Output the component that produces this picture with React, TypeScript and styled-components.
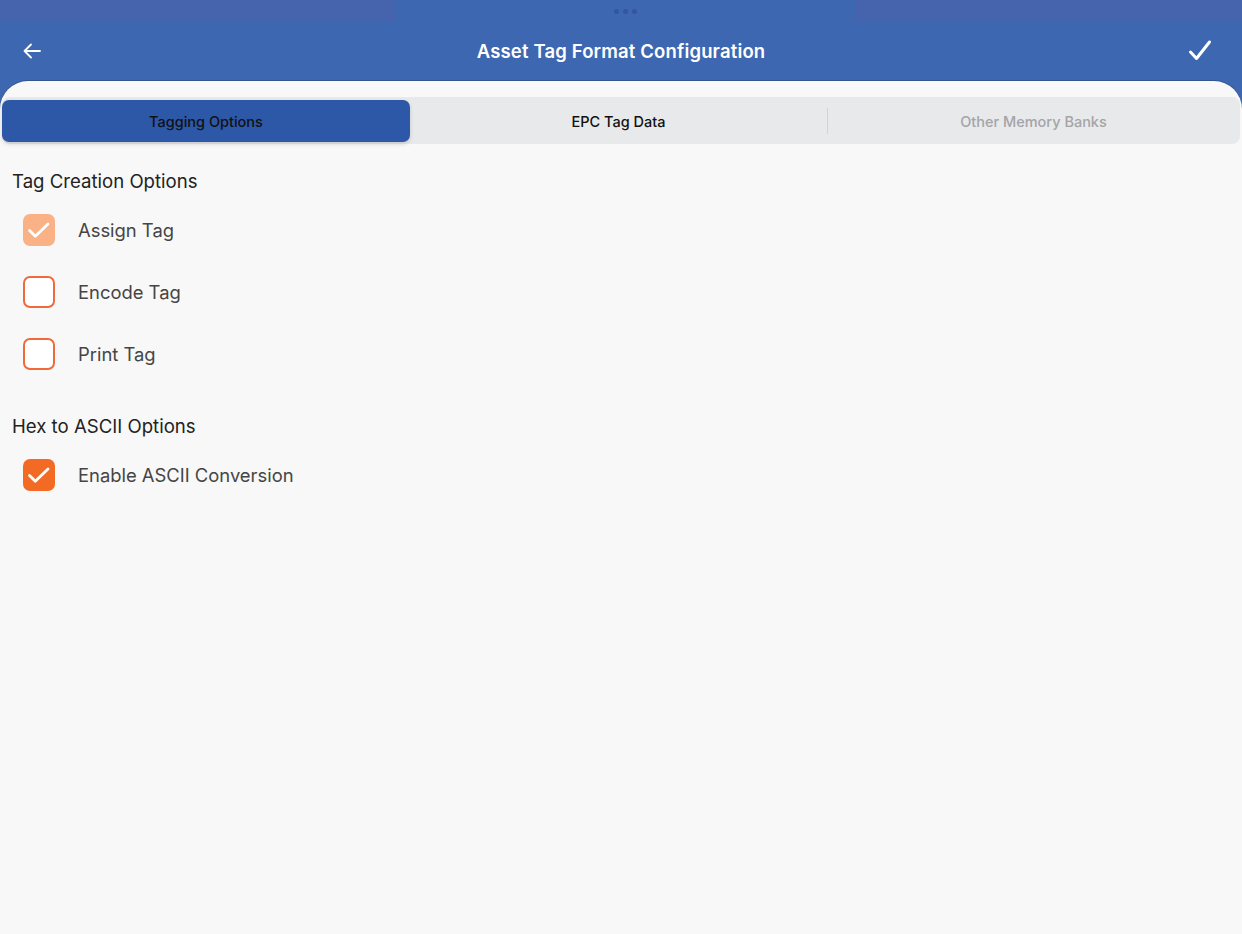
import React from 'react'
import styled, { createGlobalStyle } from 'styled-components'

const GlobalStyle = createGlobalStyle`
  html, body {
    margin: 0;
    padding: 0;
    background: #f8f8f8;
  }
  body {
    font-family: Inter, "Noto Sans", "Liberation Sans", sans-serif;
    -webkit-font-smoothing: antialiased;
  }
`

const Screen = styled.div`
  display: flex;
  flex-direction: column;
  width: 1242px;
  height: 934px;
  background: #3d67b1;
  overflow: hidden;
`

const StatusStrip = styled.div`
  display: grid;
  grid-template-columns: 395px 1fr 387px;
  height: 22px;
`

const StripPart = styled.div<{ $tint?: boolean }>`
  display: flex;
  align-items: center;
  justify-content: center;
  gap: 4px;
  background: ${(p) => (p.$tint ? '#4564ad' : '#3d67b1')};
`

const Dot = styled.span`
  width: 5px;
  height: 5px;
  border-radius: 50%;
  background: #3356a0;
`

const TitleBar = styled.div`
  display: grid;
  grid-template-columns: 1fr auto 1fr;
  align-items: center;
  height: 59px;
  padding: 0 24px 2px;
  box-sizing: border-box;
`

const IconButton = styled.button<{ $end?: boolean }>`
  display: flex;
  align-items: center;
  justify-content: center;
  justify-self: ${(p) => (p.$end ? 'end' : 'start')};
  width: 26px;
  height: 26px;
  margin: ${(p) => (p.$end ? '0 5px 0 0' : '0 0 0 -5px')};
  padding: 0;
  border: none;
  background: transparent;
  color: #fff;
`

const Title = styled.h1`
  margin: 0;
  font-size: 18.5px;
  font-weight: 600;
  color: #fff;
  letter-spacing: 0.15px;
`

const Sheet = styled.div`
  flex: 1;
  display: flex;
  flex-direction: column;
  background: #f8f8f8;
  border-radius: 28px 28px 0 0;
  box-shadow: 0 -1px 0 rgba(40, 50, 70, 0.35);
  padding-top: 16px;
`

const Segmented = styled.div`
  display: grid;
  grid-template-columns: 408px 417px 1fr;
  height: 47px;
  margin: 0 2px;
  padding: 3px 0 2px;
  box-sizing: border-box;
  background: #e8e9eb;
  border-radius: 8px;
`

const Segment = styled.div<{ $active?: boolean; $muted?: boolean; $divider?: boolean }>`
  position: relative;
  display: flex;
  align-items: center;
  justify-content: center;
  font-size: 14.5px;
  font-weight: 500;
  color: ${(p) => (p.$muted ? '#a3a4a7' : '#111')};
  background: ${(p) => (p.$active ? '#2d58a8' : 'transparent')};
  border-radius: 7px;
  box-shadow: ${(p) => (p.$active ? '0 2px 4px rgba(0,0,0,0.15)' : 'none')};
  &::before {
    content: '';
    display: ${(p) => (p.$divider ? 'block' : 'none')};
    position: absolute;
    left: 0;
    top: 8px;
    bottom: 8px;
    width: 1px;
    background: #d2d3d6;
  }
`

const Content = styled.div`
  display: flex;
  flex-direction: column;
  padding: 25px 12px 0;
`

const SectionTitle = styled.div<{ $spaced?: boolean }>`
  margin-top: ${(p) => (p.$spaced ? '29px' : '0')};
  font-size: 18.6px;
  line-height: 24px;
  color: #222;
`

const OptionList = styled.div`
  display: flex;
  flex-direction: column;
  margin-top: 6px;
`

const OptionRow = styled.label`
  display: flex;
  align-items: center;
  gap: 23px;
  height: 62px;
  padding-left: 11px;
  font-size: 18.4px;
  color: #454545;
`

const Box = styled.span<{ $state: 'off' | 'on' | 'disabled' }>`
  display: flex;
  align-items: center;
  justify-content: center;
  width: 32px;
  height: 32px;
  box-sizing: border-box;
  border-radius: 7px;
  border: ${(p) => (p.$state === 'off' ? '2px solid #f0693a' : 'none')};
  background: ${(p) =>
    p.$state === 'on' ? '#f36a24' : p.$state === 'disabled' ? '#f9b185' : '#fff'};
`

type Option = { label: string; state: 'off' | 'on' | 'disabled' }

const creationOptions: Option[] = [
  { label: 'Assign Tag', state: 'disabled' },
  { label: 'Encode Tag', state: 'off' },
  { label: 'Print Tag', state: 'off' },
]

const asciiOptions: Option[] = [{ label: 'Enable ASCII Conversion', state: 'on' }]

function Check() {
  return (
    <svg width="32" height="32" viewBox="0 0 32 32" fill="none">
      <path
        d="M6.5 16.5l5.8 5.8L25 10"
        stroke="#fff"
        strokeWidth="2.8"
        strokeLinecap="round"
        strokeLinejoin="round"
      />
    </svg>
  )
}

function OptionGroup({ items }: { items: Option[] }) {
  return (
    <OptionList>
      {items.map((o) => (
        <OptionRow key={o.label}>
          <Box $state={o.state}>{o.state !== 'off' && <Check />}</Box>
          {o.label}
        </OptionRow>
      ))}
    </OptionList>
  )
}

export default function App() {
  return (
    <Screen>
      <GlobalStyle />
      <StatusStrip>
        <StripPart $tint />
        <StripPart>
          <Dot />
          <Dot />
          <Dot />
        </StripPart>
        <StripPart $tint />
      </StatusStrip>
      <TitleBar>
        <IconButton aria-label="Back">
          <svg width="22" height="22" viewBox="0 0 22 22" fill="none">
            <path
              d="M19 11H3.5M10 4.5L3.5 11l6.5 6.5"
              stroke="#fff"
              strokeWidth="1.8"
              strokeLinecap="round"
              strokeLinejoin="round"
            />
          </svg>
        </IconButton>
        <Title>Asset Tag Format Configuration</Title>
        <IconButton $end aria-label="Save">
          <svg width="26" height="26" viewBox="0 0 26 26" fill="none">
            <path
              d="M3.5 14l6 6.5L22.5 4"
              stroke="#fff"
              strokeWidth="3"
              strokeLinecap="round"
              strokeLinejoin="round"
            />
          </svg>
        </IconButton>
      </TitleBar>
      <Sheet>
        <Segmented>
          <Segment $active>Tagging Options</Segment>
          <Segment>EPC Tag Data</Segment>
          <Segment $muted $divider>
            Other Memory Banks
          </Segment>
        </Segmented>
        <Content>
          <SectionTitle>Tag Creation Options</SectionTitle>
          <OptionGroup items={creationOptions} />
          <SectionTitle $spaced>Hex to ASCII Options</SectionTitle>
          <OptionGroup items={asciiOptions} />
        </Content>
      </Sheet>
    </Screen>
  )
}
